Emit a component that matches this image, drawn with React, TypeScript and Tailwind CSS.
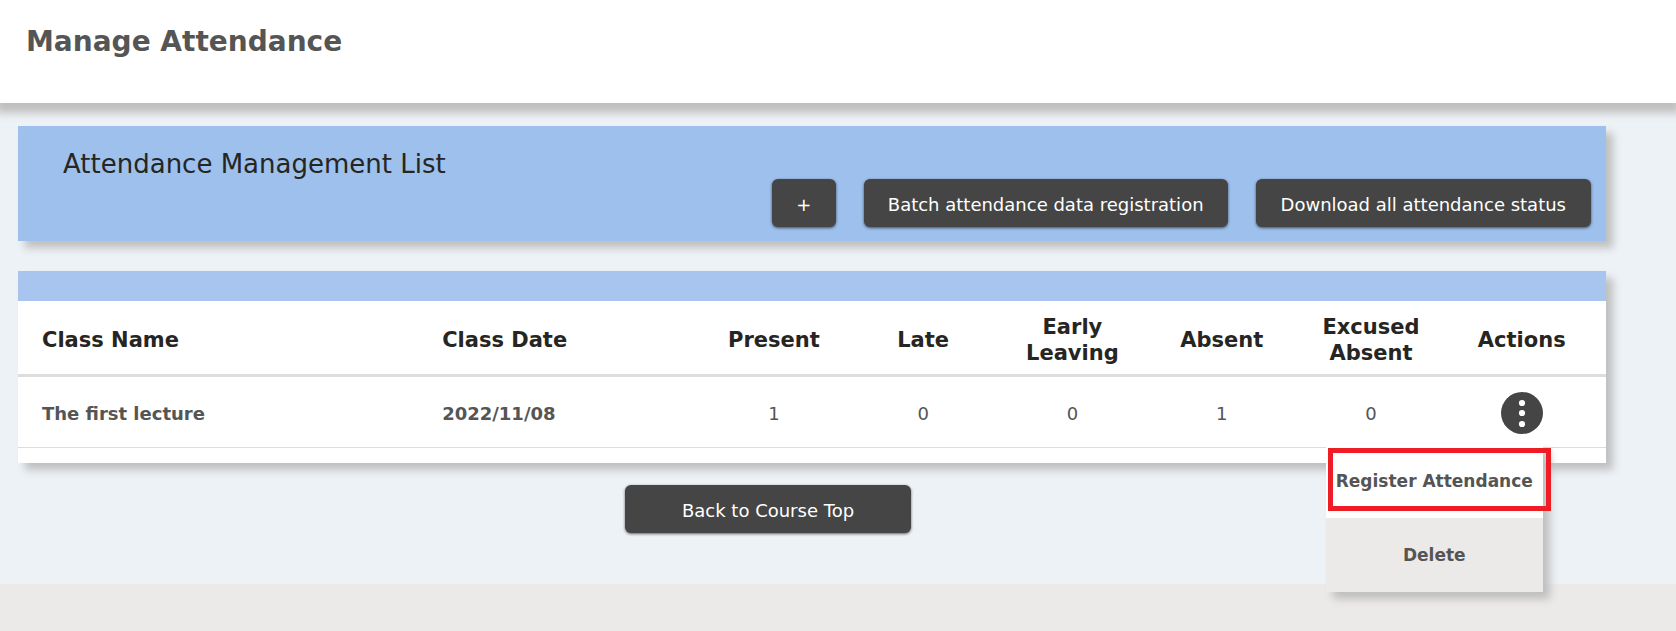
import { useState } from "react";

type Lecture = {
  name: string;
  date: string;
  counts: number[];
};

const lectures: Lecture[] = [
  { name: "The first lecture", date: "2022/11/08", counts: [1, 0, 0, 1, 0] },
];

const countColumns = ["Present", "Late", "Early Leaving", "Absent", "Excused Absent"];

const panelShadow = "shadow-[7px_7px_8px_#bfbfbf]";

function DarkButton({ label, className }: { label: string; className: string }) {
  return (
    <button
      type="button"
      className={`h-12 cursor-pointer rounded-md bg-[#444544] pt-1 text-lg text-white shadow-[0_1px_3px_rgba(0,0,0,0.6)] ${className}`}
    >
      {label}
    </button>
  );
}

function RowActions() {
  const [open, setOpen] = useState(true);
  return (
    <div className="relative mx-auto size-[42px]">
      <button
        type="button"
        aria-label="Actions"
        aria-expanded={open}
        onClick={() => setOpen(!open)}
        className="block size-full cursor-pointer rounded-full bg-[#444544]"
      >
        <svg viewBox="0 0 42 42" className="size-full" fill="white" aria-hidden="true">
          <circle cx="21" cy="11" r="3.1" />
          <circle cx="21" cy="21" r="3.1" />
          <circle cx="21" cy="32" r="3.1" />
        </svg>
      </button>
      {open && (
        <div
          className={`absolute top-[52px] right-0 z-10 w-[217px] text-[17px] font-bold whitespace-nowrap ${panelShadow}`}
        >
          <button type="button" className="block h-[74px] w-full cursor-pointer bg-white">
            Register Attendance
          </button>
          <button type="button" className="block h-[74px] w-full cursor-pointer bg-[#ebeae8]">
            Delete
          </button>
          <div className="pointer-events-none absolute top-1 -right-2 left-0.5 h-[63px] border-5 border-[#ee1c24]" />
        </div>
      )}
    </div>
  );
}

export default function App() {
  return (
    <div className="flex min-h-screen flex-col bg-[#ebeae8] font-['Verdana','DejaVu_Sans',sans-serif] text-[#545554]">
      <header className="relative bg-white px-[26px] pt-6 pb-[43px] shadow-[0_6px_8px_4px_#bfbfbf]">
        <h1 className="text-[28px] leading-9 font-bold">Manage Attendance</h1>
      </header>

      <main className="bg-[#edf2f7] pt-[23px] pr-[70px] pb-[51px] pl-[18px]">
        <section className={`relative bg-[#9dc0ec] pt-6 pr-[15px] pb-3.5 pl-[45px] ${panelShadow}`}>
          <h2 className="text-[26px] leading-[29px] text-[#262522]">Attendance Management List</h2>
          <div className="flex justify-end gap-7">
            <DarkButton label="+" className="w-16" />
            <DarkButton label="Batch attendance data registration" className="px-6" />
            <DarkButton label="Download all attendance status" className="px-[25px]" />
          </div>
        </section>

        <section className={`mt-[30px] border-t-30 border-[#a7c5ef] bg-white pb-[15px] ${panelShadow}`}>
          <table className="w-full table-fixed border-separate border-spacing-0">
            <colgroup>
              <col className="w-[25.2%]" />
              <col className="w-[17.7%]" />
              <col className="w-[9.4%]" />
              <col className="w-[9.4%]" />
              <col className="w-[9.4%]" />
              <col className="w-[9.4%]" />
              <col className="w-[9.4%]" />
              <col />
            </colgroup>
            <thead>
              <tr className="h-[76px] text-[21px] leading-[26px] text-[#262522] [&>th]:border-b-3 [&>th]:border-[#dddddd] [&>th]:pt-1">
                <th className="pl-6 text-left">Class Name</th>
                <th className="pl-6 text-left">Class Date</th>
                {countColumns.map((label) => (
                  <th key={label} className="px-4">
                    {label}
                  </th>
                ))}
                <th className="pr-2">Actions</th>
              </tr>
            </thead>
            <tbody>
              {lectures.map((lecture) => (
                <tr
                  key={lecture.name}
                  className="h-[71px] text-lg [&>td]:border-b [&>td]:border-[#dddddd]"
                >
                  <td className="pt-1 pl-6 font-bold">{lecture.name}</td>
                  <td className="pt-1 pl-6 font-bold">{lecture.date}</td>
                  {lecture.counts.map((count, i) => (
                    <td key={countColumns[i]} className="pt-1 text-center">
                      {count}
                    </td>
                  ))}
                  <td className="pt-0.5 pr-2">
                    <RowActions />
                  </td>
                </tr>
              ))}
            </tbody>
          </table>
        </section>

        <div className="mt-[22px] flex justify-center pr-[88px]">
          <DarkButton label="Back to Course Top" className="w-[286px]" />
        </div>
      </main>
    </div>
  );
}
